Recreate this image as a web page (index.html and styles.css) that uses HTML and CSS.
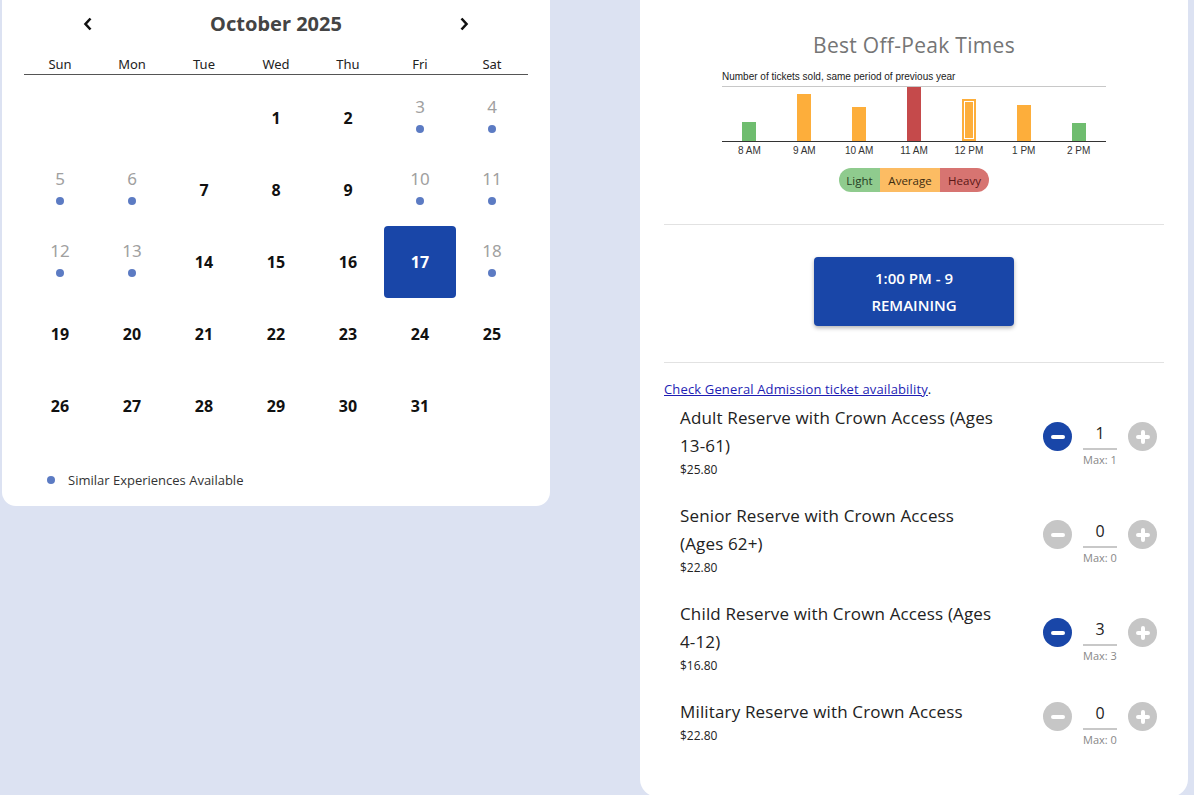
FILE: index.html
```html
<!DOCTYPE html>
<html lang="en">
<head>
<meta charset="utf-8">
<title>Reserve tickets</title>
<link rel="stylesheet" href="styles.css">
</head>
<body>
<div class="page">
  <section class="card cal-card">
    <div class="cal-header">
      <span class="nav-btn"><svg width="10" height="14" viewBox="0 0 10 14"><polyline points="7.5,1.5 2.5,7 7.5,12.5" fill="none" stroke="#111" stroke-width="2.6"/></svg></span>
      <h2 class="cal-title">October 2025</h2>
      <span class="nav-btn"><svg width="10" height="14" viewBox="0 0 10 14"><polyline points="2.5,1.5 7.5,7 2.5,12.5" fill="none" stroke="#111" stroke-width="2.6"/></svg></span>
    </div>
    <div class="weekdays">
      <span>Sun</span><span>Mon</span><span>Tue</span><span>Wed</span><span>Thu</span><span>Fri</span><span>Sat</span>
    </div>
    <div class="days">
      <div class="day"></div><div class="day"></div><div class="day"></div>
      <div class="day avail">1</div><div class="day avail">2</div>
      <div class="day similar"><span>3</span><i class="dot"></i></div>
      <div class="day similar"><span>4</span><i class="dot"></i></div>

      <div class="day similar"><span>5</span><i class="dot"></i></div>
      <div class="day similar"><span>6</span><i class="dot"></i></div>
      <div class="day avail">7</div><div class="day avail">8</div><div class="day avail">9</div>
      <div class="day similar"><span>10</span><i class="dot"></i></div>
      <div class="day similar"><span>11</span><i class="dot"></i></div>

      <div class="day similar"><span>12</span><i class="dot"></i></div>
      <div class="day similar"><span>13</span><i class="dot"></i></div>
      <div class="day avail">14</div><div class="day avail">15</div><div class="day avail">16</div>
      <div class="day avail selected">17</div>
      <div class="day similar"><span>18</span><i class="dot"></i></div>

      <div class="day avail">19</div><div class="day avail">20</div><div class="day avail">21</div><div class="day avail">22</div><div class="day avail">23</div><div class="day avail">24</div><div class="day avail">25</div>

      <div class="day avail">26</div><div class="day avail">27</div><div class="day avail">28</div><div class="day avail">29</div><div class="day avail">30</div><div class="day avail">31</div><div class="day"></div>
    </div>
    <div class="legend">
      <i class="dot"></i><span>Similar Experiences Available</span>
    </div>
  </section>

  <section class="card ticket-card">
    <h2 class="peak-title">Best Off-Peak Times</h2>
    <div class="chart">
      <div class="chart-caption">Number of tickets sold, same period of previous year</div>
      <div class="plot">
        <div class="slot"><div class="bar light" style="height:19px"></div></div>
        <div class="slot"><div class="bar average" style="height:47px"></div></div>
        <div class="slot"><div class="bar average" style="height:34px"></div></div>
        <div class="slot"><div class="bar heavy" style="height:54px"></div></div>
        <div class="slot"><div class="bar average current" style="height:42px"></div></div>
        <div class="slot"><div class="bar average" style="height:36px"></div></div>
        <div class="slot"><div class="bar light" style="height:18px"></div></div>
      </div>
      <div class="axis">
        <span>8 AM</span><span>9 AM</span><span>10 AM</span><span>11 AM</span><span>12 PM</span><span>1 PM</span><span>2 PM</span>
      </div>
    </div>
    <div class="pill">
      <span class="seg seg-light">Light</span><span class="seg seg-average">Average</span><span class="seg seg-heavy">Heavy</span>
    </div>

    <hr class="sep">
    <div class="time-wrap">
      <button class="time-btn">1:00 PM - 9<br>REMAINING</button>
    </div>
    <hr class="sep">

    <p class="ga-link"><a href="#">Check General Admission ticket availability</a>.</p>

    <div class="tickets">
      <div class="ticket">
        <div class="t-info">
          <div class="t-name">Adult Reserve with Crown Access (Ages <span class="nw">13-61)</span></div>
          <div class="t-price">$25.80</div>
        </div>
        <div class="qty">
          <span class="circ active"><i class="bar-h"></i></span>
          <div class="qty-col"><div class="qty-val">1</div><div class="qty-max">Max: 1</div></div>
          <span class="circ"><i class="bar-h"></i><i class="bar-v"></i></span>
        </div>
      </div>
      <div class="ticket">
        <div class="t-info">
          <div class="t-name">Senior Reserve with Crown Access <span class="nw">(Ages 62+)</span></div>
          <div class="t-price">$22.80</div>
        </div>
        <div class="qty">
          <span class="circ"><i class="bar-h"></i></span>
          <div class="qty-col"><div class="qty-val">0</div><div class="qty-max">Max: 0</div></div>
          <span class="circ"><i class="bar-h"></i><i class="bar-v"></i></span>
        </div>
      </div>
      <div class="ticket">
        <div class="t-info">
          <div class="t-name">Child Reserve with Crown Access (Ages <span class="nw">4-12)</span></div>
          <div class="t-price">$16.80</div>
        </div>
        <div class="qty">
          <span class="circ active"><i class="bar-h"></i></span>
          <div class="qty-col"><div class="qty-val">3</div><div class="qty-max">Max: 3</div></div>
          <span class="circ"><i class="bar-h"></i><i class="bar-v"></i></span>
        </div>
      </div>
      <div class="ticket">
        <div class="t-info">
          <div class="t-name">Military Reserve with Crown Access</div>
          <div class="t-price">$22.80</div>
        </div>
        <div class="qty">
          <span class="circ"><i class="bar-h"></i></span>
          <div class="qty-col"><div class="qty-val">0</div><div class="qty-max">Max: 0</div></div>
          <span class="circ"><i class="bar-h"></i><i class="bar-v"></i></span>
        </div>
      </div>
    </div>
  </section>
</div>
</body>
</html>
```

FILE: styles.css
```css
* { box-sizing: border-box; }

html, body {
  margin: 0;
  padding: 0;
  height: 100%;
  overflow: hidden;
}

body {
  background: #dce2f2;
  font-family: "Noto Sans", "Open Sans", sans-serif;
  color: #222;
}

.page {
  display: flex;
  align-items: flex-start;
  gap: 90px;
  padding-left: 2px;
}

.card {
  background: #fff;
  width: 548px;
  flex: none;
}

/* ---------- calendar ---------- */
.cal-card {
  border-radius: 0 0 14px 14px;
  padding: 10px 22px 17px 22px;
}

.cal-header {
  display: flex;
  align-items: center;
  justify-content: center;
  gap: 114px;
  height: 28px;
}

.nav-btn {
  width: 16px;
  display: flex;
  justify-content: center;
  align-items: center;
}

.cal-title {
  margin: 0;
  font-size: 20px;
  line-height: 28px;
  font-weight: 700;
  color: #444;
}

.weekdays {
  margin-top: 17px;
  display: grid;
  grid-template-columns: repeat(7, 72px);
  border-bottom: 1px solid #555;
  font-size: 13px;
  line-height: 18px;
  height: 20px;
  color: #222;
}

.weekdays span { text-align: center; }

.days {
  margin-top: 7px;
  display: grid;
  grid-template-columns: repeat(7, 72px);
  grid-auto-rows: 72px;
}

.day {
  display: flex;
  flex-direction: column;
  align-items: center;
  justify-content: center;
  border-radius: 4px;
}

.day.avail {
  font-size: 16px;
  font-weight: 700;
  color: #111;
}

.day.selected {
  background: #1946a8;
  color: #fff;
}

.day.similar {
  font-size: 17px;
  font-weight: 400;
  color: #a0a0a0;
  padding-bottom: 7px;
  gap: 7px;
}

.day.similar span { line-height: 22px; }

.dot {
  display: block;
  width: 8px;
  height: 8px;
  border-radius: 50%;
  background: #5c7bc3;
}

.legend {
  margin-top: 29px;
  margin-left: 23px;
  display: flex;
  align-items: center;
  gap: 13px;
  font-family: "Open Sans", sans-serif;
  font-size: 13px;
  line-height: 18px;
  color: #333;
}

/* ---------- right card ---------- */
.ticket-card {
  font-family: "Open Sans", sans-serif;
  border-radius: 0 0 18px 18px;
  padding: 30px 24px 0 24px;
  height: 797px;
}

.peak-title {
  margin: 0;
  text-align: center;
  font-size: 21px;
  letter-spacing: 0.3px;
  line-height: 30px;
  font-weight: 400;
  color: #757575;
}

.chart {
  width: 384px;
  margin: 11px auto 0;
  font-family: "Liberation Sans", Arial, sans-serif;
}

.chart-caption {
  font-size: 10px;
  line-height: 12px;
  color: #222;
  margin-bottom: 3px;
}

.plot {
  height: 56px;
  border-top: 1px solid #c8c8c8;
  border-bottom: 1px solid #333;
  display: flex;
  align-items: flex-end;
}

.slot {
  flex: 1;
  display: flex;
  justify-content: center;
}

.bar {
  width: 14px;
}

.bar.light { background: #6fbd6f; }
.bar.average { background: #fdae3b; }
.bar.heavy { background: #c54a4b; }
.bar.current {
  box-shadow: inset 0 0 0 2px #fdae3b, inset 0 0 0 3px #fff;
}

.axis {
  display: flex;
  margin-top: 3px;
  font-size: 10px;
  line-height: 11px;
  color: #333;
}

.axis span {
  flex: 1;
  text-align: center;
}

.pill {
  margin: 12px auto 0;
  display: flex;
  width: 150px;
  height: 24px;
  border-radius: 12px;
  overflow: hidden;
  font-size: 11.5px;
}

.seg {
  display: flex;
  align-items: center;
  justify-content: center;
  color: #333;
}

.seg-light { width: 41px; background: #8fcb8e; color: #253b24; }
.seg-average { width: 60px; background: #fcbc63; color: #3d2d10; }
.seg-heavy { width: 49px; background: #d77471; color: #5a1616; }

.sep {
  margin: 0;
  border: 0;
  border-top: 1px solid #e2e2e2;
}

.pill + .sep { margin-top: 32px; }

.time-wrap {
  display: flex;
  justify-content: center;
  padding: 32px 0 36px;
}

.time-btn {
  width: 200px;
  height: 69px;
  border: 0;
  border-radius: 4px;
  background: #1946a8;
  color: #fff;
  font-family: "Open Sans", sans-serif;
  font-size: 15px;
  font-weight: 600;
  line-height: 27px;
  box-shadow: 0 2px 4px rgba(0, 0, 0, 0.3);
}

.ga-link {
  margin: 17px 0 6px;
  font-size: 13px;
  letter-spacing: 0.15px;
  line-height: 18px;
  color: #222;
}

.ga-link a {
  color: #1e1eb4;
  text-decoration: underline;
}

.tickets {
  display: flex;
  flex-direction: column;
  gap: 22px;
}

.ticket {
  display: flex;
  align-items: center;
  justify-content: space-between;
  padding: 0 7px 0 16px;
}

.t-info {
  width: 322px;
}

.t-name {
  font-size: 17px;
  letter-spacing: 0.15px;
  line-height: 28px;
  color: #222;
}

.nw { white-space: nowrap; }

.t-price {
  font-size: 12px;
  line-height: 20px;
  color: #222;
}

.qty {
  display: flex;
  align-items: flex-start;
  gap: 11px;
}

.circ {
  position: relative;
  margin-top: 4px;
  width: 29px;
  height: 29px;
  border-radius: 50%;
  background: #c6c6c6;
  display: block;
}

.circ.active { background: #1946a8; }

.bar-h, .bar-v {
  position: absolute;
  left: 50%;
  top: 50%;
  background: #fff;
  border-radius: 2px;
}

.bar-h {
  width: 14px;
  height: 4px;
  margin: -2px 0 0 -7px;
}

.bar-v {
  width: 4px;
  height: 14px;
  margin: -7px 0 0 -2px;
}

.qty-col {
  width: 34px;
  display: flex;
  flex-direction: column;
  align-items: center;
}

.qty-val {
  width: 34px;
  height: 32px;
  border-bottom: 2px solid #c8c8c8;
  text-align: center;
  font-size: 16px;
  line-height: 30px;
  color: #222;
}

.qty-max {
  margin-top: 3px;
  font-size: 11px;
  line-height: 13px;
  color: #888;
  white-space: nowrap;
}
```
